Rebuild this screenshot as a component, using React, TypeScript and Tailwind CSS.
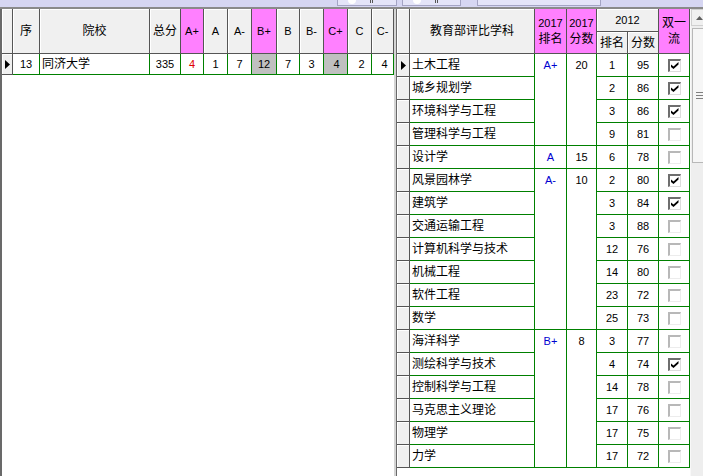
import React from 'react';

type Item = { name: string; rank: number; score: number; dual: boolean };
type Group = { grade: string; pts: number; span: string; items: Item[] };

const groups: Group[] = [
  {
    grade: 'A+',
    pts: 20,
    span: 'row-span-4',
    items: [
      { name: '土木工程', rank: 1, score: 95, dual: true },
      { name: '城乡规划学', rank: 2, score: 86, dual: true },
      { name: '环境科学与工程', rank: 3, score: 86, dual: true },
      { name: '管理科学与工程', rank: 9, score: 81, dual: false },
    ],
  },
  {
    grade: 'A',
    pts: 15,
    span: 'row-span-1',
    items: [{ name: '设计学', rank: 6, score: 78, dual: false }],
  },
  {
    grade: 'A-',
    pts: 10,
    span: 'row-span-7',
    items: [
      { name: '风景园林学', rank: 2, score: 80, dual: true },
      { name: '建筑学', rank: 3, score: 84, dual: true },
      { name: '交通运输工程', rank: 3, score: 88, dual: false },
      { name: '计算机科学与技术', rank: 12, score: 76, dual: false },
      { name: '机械工程', rank: 14, score: 80, dual: false },
      { name: '软件工程', rank: 23, score: 72, dual: false },
      { name: '数学', rank: 25, score: 73, dual: false },
    ],
  },
  {
    grade: 'B+',
    pts: 8,
    span: 'row-span-6',
    items: [
      { name: '海洋科学', rank: 3, score: 77, dual: false },
      { name: '测绘科学与技术', rank: 4, score: 74, dual: true },
      { name: '控制科学与工程', rank: 14, score: 78, dual: false },
      { name: '马克思主义理论', rank: 17, score: 76, dual: false },
      { name: '物理学', rank: 17, score: 75, dual: false },
      { name: '力学', rank: 17, score: 72, dual: false },
    ],
  },
];

// shared cell looks
const hd = 'bg-[#f0f0f0] border-r border-b border-[#555555] shadow-[inset_1px_1px_0_#ffffff] flex items-center justify-center text-center leading-[16px]';
const pk = 'bg-[#ff80ff] border-r border-b border-[#555555] flex items-center justify-center text-center leading-[16px]';
const td = 'bg-white border-r border-b border-[#008000] flex items-center justify-center';
const ind = 'bg-[#f0f0f0] border-r border-b border-[#555555] shadow-[inset_1px_1px_0_#ffffff] flex items-center justify-center';
const num = 'text-[11px]';

const Arrow = () => (
  <svg width="5" height="9" viewBox="0 0 5 9">
    <path d="M0 0 L5 4.5 L0 9 Z" fill="#000" />
  </svg>
);

const Check = ({ on }: { on: boolean }) => (
  <span
    className={
      on
        ? 'w-[13px] h-[13px] bg-white border-t-2 border-l-2 border-[#6e6e6e] border-r border-b border-r-[#dcdcdc] border-b-[#dcdcdc] flex items-center justify-center'
        : 'w-[13px] h-[13px] bg-white border-t-2 border-l-2 border-[#b8b8b8] border-r border-b border-r-[#ececec] border-b-[#ececec]'
    }
  >
    {on && (
      <svg width="8" height="7" viewBox="0 0 8 7">
        <path d="M0 2.5 L2.5 4.5 L7.5 0 L7.5 2.5 L2.5 7 L0 5 Z" fill="#000" />
      </svg>
    )}
  </span>
);

const TopStrip = () => (
  <div className="h-[7px] shrink-0 bg-[#d6d6f2] flex items-start">
    <div className="ml-[337px] w-[60px] h-[6px] border-x border-b border-[#a4a4c4] bg-[#e4e4f8] flex items-start pl-[10px] gap-[14px]">
      <span className="w-[8px] h-[4px] rounded-b-full bg-white" />
      <span className="w-[3px] h-[3px] border-x border-[#555]" />
    </div>
    <div className="ml-[5px] w-[59px] h-[6px] border-x border-b border-[#a4a4c4] bg-[#e4e4f8] flex items-start pl-[10px] gap-[14px]">
      <span className="w-[8px] h-[4px] rounded-b-full bg-white" />
      <span className="w-[3px] h-[3px] border-x border-[#555]" />
    </div>
    <div className="ml-[16px] w-[124px] h-[6px] border-x border-b border-[#a4a4c4] bg-[#e4e4f8]" />
  </div>
);

const LeftGrid = () => {
  const grades = ['A+', 'A', 'A-', 'B+', 'B', 'B-', 'C+', 'C', 'C-'];
  const pink = ['A+', 'B+', 'C+'];
  return (
    <div className="w-[394px] shrink-0 bg-white border-l-2 border-[#696969]">
      <div className="grid grid-cols-[11px_27px_110px_31px_23px_24px_24px_25px_23px_24px_24px_24px_22px] grid-rows-[45px_21px]">
        <div className={hd} />
        <div className={hd}>序</div>
        <div className={hd}>院校</div>
        <div className={hd}>总分</div>
        {grades.map((g) => (
          <div key={g} className={(pink.includes(g) ? pk : hd) + ' ' + num}>
            {g}
          </div>
        ))}

        <div className={ind}>
          <Arrow />
        </div>
        <div className={td + ' ' + num}>13</div>
        <div className={td + ' !justify-start pl-[2px]'}>同济大学</div>
        <div className={td + ' ' + num}>335</div>
        <div className={td + ' ' + num + ' text-[#e00000]'}>4</div>
        <div className={td + ' ' + num}>1</div>
        <div className={td + ' ' + num}>7</div>
        <div className={td + ' ' + num + ' !bg-[#c0c0c0]'}>12</div>
        <div className={td + ' ' + num}>7</div>
        <div className={td + ' ' + num}>3</div>
        <div className={td + ' ' + num + ' !bg-[#c0c0c0] pl-[2px]'}>4</div>
        <div className={td + ' ' + num + ' pl-[4px]'}>2</div>
        <div className={td + ' ' + num + ' pl-[4px]'}>4</div>
      </div>
    </div>
  );
};

const RightGrid = () => (
  <div className="w-[294px] shrink-0 bg-white border-l border-[#696969]">
    <div className="grid grid-cols-[13px_125px_32px_30px_31px_31px_31px] grid-rows-[23px_22px_repeat(18,23px)]">
      <div className={hd + ' row-span-2'} />
      <div className={hd + ' row-span-2'}>教育部评比学科</div>
      <div className={pk + ' row-span-2 flex-col'}>
        <span className={num}>2017</span>
        <span>排名</span>
      </div>
      <div className={pk + ' row-span-2 flex-col'}>
        <span className={num}>2017</span>
        <span>分数</span>
      </div>
      <div className={hd + ' col-span-2 ' + num}>2012</div>
      <div className={pk + ' row-span-2 flex-col'}>
        <span>双一</span>
        <span>流</span>
      </div>
      <div className={hd}>排名</div>
      <div className={hd}>分数</div>

      {groups.map((g) =>
        g.items.map((it, i) => (
          <React.Fragment key={it.name}>
            <div className={ind}>{g.grade === 'A+' && i === 0 && <Arrow />}</div>
            <div className={td + ' !justify-start pl-[2px]'}>{it.name}</div>
            {i === 0 && (
              <>
                <div className={td + ' ' + g.span + ' !items-start ' + num}>
                  <span className="h-[22px] flex items-center text-[#0000d0]">{g.grade}</span>
                </div>
                <div className={td + ' ' + g.span + ' !items-start ' + num}>
                  <span className="h-[22px] flex items-center">{g.pts}</span>
                </div>
              </>
            )}
            <div className={td + ' ' + num}>{it.rank}</div>
            <div className={td + ' ' + num}>{it.score}</div>
            <div className={td}>
              <Check on={it.dual} />
            </div>
          </React.Fragment>
        ))
      )}
    </div>
  </div>
);

const ScrollBar = () => (
  <div className="w-[17px] shrink-0 bg-[#eeeeee] border-l border-[#f8f8f8] flex flex-col">
    <div className="h-[17px] bg-[#f0f0f0] border border-[#d0d0d0] flex items-center justify-center">
      <svg width="7" height="4" viewBox="0 0 7 4">
        <path d="M0 4 L3.5 0 L7 4 Z" fill="#606060" />
      </svg>
    </div>
    <div className="mt-[2px] ml-[1px] h-[135px] bg-[#f6f6f6] border border-[#b8b8b8] flex flex-col items-center justify-center gap-[2px]">
      <span className="w-[7px] h-px bg-[#808080]" />
      <span className="w-[7px] h-px bg-[#808080]" />
      <span className="w-[7px] h-px bg-[#808080]" />
    </div>
  </div>
);

export default function App() {
  return (
    <div className="w-[703px] h-[476px] overflow-hidden flex flex-col bg-[#f0f0f0] text-[12px] text-black font-['Liberation_Sans','Noto_Sans_CJK_SC',sans-serif]">
      <TopStrip />
      <div className="flex flex-1 min-h-0 border-t-2 border-[#8a8a8a]">
        <LeftGrid />
        <div className="w-[2px] shrink-0 bg-[#d4d4d4]" />
        <RightGrid />
        <ScrollBar />
      </div>
    </div>
  );
}
